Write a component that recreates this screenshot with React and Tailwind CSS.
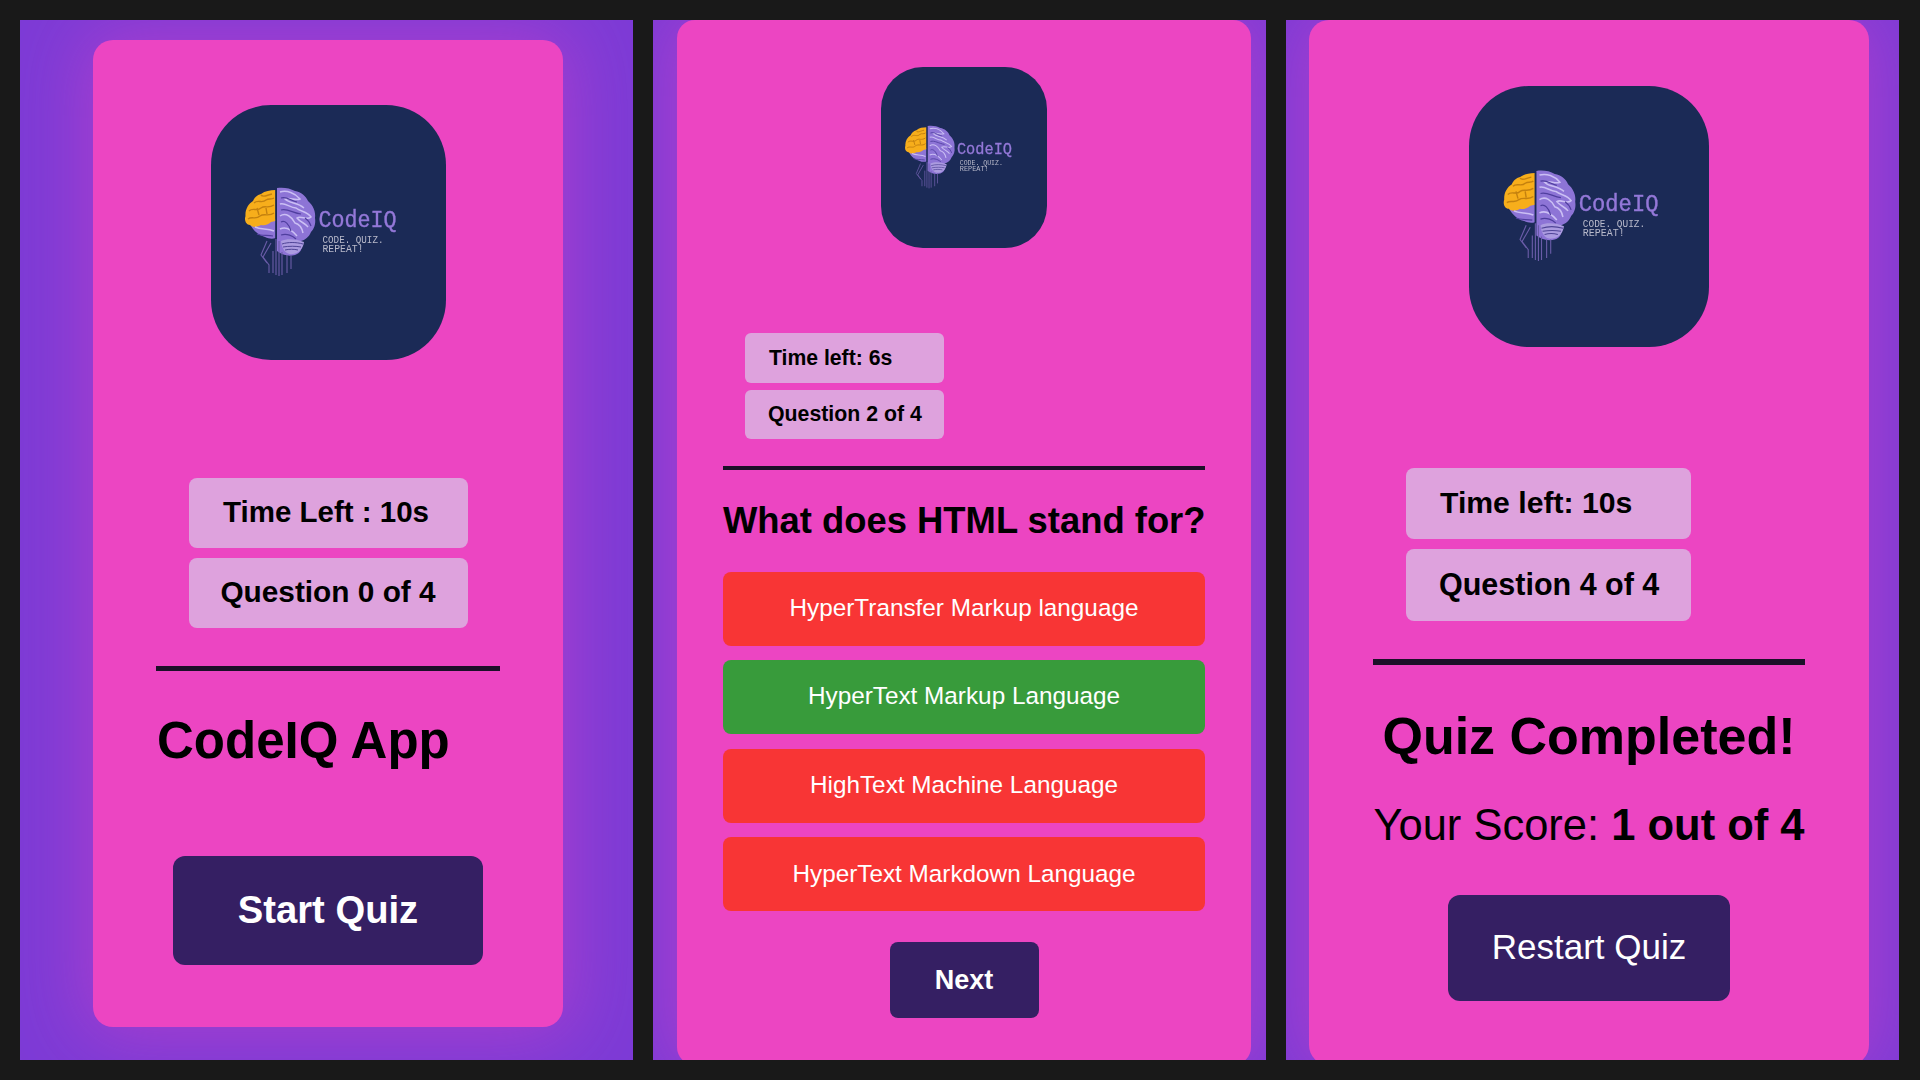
import React from "react";

// brain + wordmark, same drawing scaled for all three screens
const Logo = ({ className }) => (
  <div className={`flex-none overflow-hidden bg-[#1b2a56] ${className}`}>
    <svg viewBox="0 0 235 255" preserveAspectRatio="none" className="block h-full w-full blur-[0.5px]">
      {/* purple lobes */}
      <path d="M38 117C41 124 46 130 54 132C58 134 62 134 64.5 133L64.5 114L44 114Z" fill="#8d74d6" />
      <path d="M66 83C72 82 79 83 84 86C90 87 95 91 97 96C102 100 105 107 104 113C105 119 103 124 100 127C98 132 94 135 90 136C92 143 90 148 84 150C76 152 70 149 66 146Z" fill="#8d74d6" />
      {/* orange lobe */}
      <path d="M64.5 85C59 85 54 86 50 89C46 90 43 93 42 96C37 99 34 105 34.5 111C33 115 35 120 39 120C42 123 47 122 50 120C54 121 58 119 60 117L64.5 116Z" fill="#f7ae1b" />
      <g fill="none" stroke="#c4810f" strokeWidth="1.4">
        <path d="M43 98C47 94 51 99 55 95C58 93 60 95 63 93" />
        <path d="M38 106C42 102 46 107 50 103C54 100 57 104 63 100" />
        <path d="M37 114C41 111 45 115 49 111C53 108 58 112 63 108" />
        <path d="M50 90C52 93 56 90 61 89M46 103L48 110M55 103L56 109" />
      </g>
      <g fill="none" stroke="#cbbff4" strokeWidth="1.5">
        <path d="M69 87C76 85 84 88 89 94C84 96 79 92 74 94C79 99 86 97 93 103" />
        <path d="M69 99C74 97 79 103 85 103C90 107 96 106 100 112C96 116 90 110 86 113C89 117 94 118 97 122" />
        <path d="M69 111C75 107 81 112 84 118C88 119 91 123 92 128" />
        <path d="M44 122C50 125 56 123 63 126M69 124C75 121 81 125 86 131" />
      </g>
      <g fill="none" stroke="#4f3e9e" strokeWidth="1.2">
        <path d="M70 93C76 91 80 96 86 97M70 105C76 103 82 108 90 109M70 117C74 115 78 119 80 126" />
        <path d="M46 129C50 131 56 130 62 131M70 130C76 128 82 131 85 134M94 113C97 115 99 118 100 121" />
      </g>
      {/* cerebellum */}
      <path d="M70 136C76 133 86 134 93 137C92 144 88 148 82 149C76 150 71 146 70 136Z" fill="#ab9be0" />
      <g fill="none" stroke="#4f4496" strokeWidth="1">
        <path d="M71 139C77 137 85 137 92 139M72 142C78 141 85 141 90 142M74 145C78 144 83 144 87 145" />
      </g>
      <path d="M65 84L65 134" stroke="#1b2a56" strokeWidth="1.4" />
      {/* circuit stem */}
      <g fill="none" stroke="#6a5ca8" strokeWidth="1.1">
        <path d="M65 134L65 170M68 136L68 171M71 147L71 170M76 150L76 168M80 150L80 164" />
        <path d="M60 138L52 152L58 160L58 168M56 136L50 150L56 158M62 146L62 168" />
      </g>
      <text x="107.5" y="122" textLength="78" lengthAdjust="spacingAndGlyphs" fontFamily="'Liberation Mono', monospace" fontSize="24" stroke="#9478d8" strokeWidth="0.4" fill="#9478d8">CodeIQ</text>
      <text x="111.5" y="137.5" textLength="61" lengthAdjust="spacingAndGlyphs" fontFamily="'Liberation Mono', monospace" fontSize="10" fill="#b9bacb">CODE. QUIZ.</text>
      <text x="111.5" y="147" textLength="41" lengthAdjust="spacingAndGlyphs" fontFamily="'Liberation Mono', monospace" fontSize="10" fill="#b9bacb">REPEAT!</text>
    </svg>
  </div>
);

const Panel = ({ children }) => (
  <div className="h-[1040px] overflow-hidden bg-[#7d3bd6]">{children}</div>
);

const options = [
  { text: "HyperTransfer Markup language", color: "bg-[#f83535]" },
  { text: "HyperText Markup Language", color: "bg-[#389b3b]" },
  { text: "HighText Machine Language", color: "bg-[#f83535]" },
  { text: "HyperText Markdown Language", color: "bg-[#f83535]" },
];

const StartScreen = () => (
  <Panel>
    <div className="ml-[73px] mt-[20px] flex h-[987px] w-[470px] flex-col items-center rounded-[20px] bg-[#ec45c2] shadow-[0_0_70px_10px_rgba(240,70,195,0.36)]">
      <Logo className="mt-[65px] h-[255px] w-[235px] rounded-[60px]" />
      <div className="mt-[118px] flex h-[70px] w-[279px] items-center justify-center rounded-[8px] bg-[#dea2dd] pb-[1px] pr-[4px] text-[29.5px] font-bold text-black">Time Left : 10s</div>
      <div className="mt-[10px] flex h-[70px] w-[279px] items-center justify-center rounded-[8px] bg-[#dea2dd] pb-[1px] text-[29.8px] font-bold text-black">Question 0 of 4</div>
      <div className="mt-[38px] h-[5px] w-[344px] flex-none bg-[#1c1028]" />
      <h1 className="mt-[40px] w-[344px] pl-[1px] text-left text-[51px] font-bold leading-[60px] text-black">CodeIQ App</h1>
      <button className="mt-[85px] h-[109px] w-[310px] flex-none rounded-[12px] bg-[#351f63] pb-[2px] text-[38.2px] font-bold text-white">Start Quiz</button>
    </div>
  </Panel>
);

const QuestionScreen = () => (
  <Panel>
    <div className="ml-[24px] flex h-[1045px] w-[574px] flex-col items-center rounded-[18px] bg-[#ec45c2] shadow-[0_0_70px_10px_rgba(240,70,195,0.36)]">
      <Logo className="mt-[47px] h-[181px] w-[166px] rounded-[42px]" />
      <div className="ml-[68px] mt-[85px] flex w-[199px] flex-col gap-[7px] self-start">
        <div className="flex h-[50px] items-center rounded-[6px] bg-[#dea2dd] pb-[1px] pl-[24px] text-[21.2px] font-bold text-black">Time left: 6s</div>
        <div className="flex h-[49px] items-center rounded-[6px] bg-[#dea2dd] pl-[23px] text-[21.3px] font-bold text-black">Question 2 of 4</div>
      </div>
      <div className="mt-[27px] h-[4px] w-[482px] flex-none bg-[#1c1028]" />
      <h2 className="mt-[27.5px] w-[482px] whitespace-nowrap text-left text-[36.4px] font-bold leading-[45px] text-black">What does HTML stand for?</h2>
      <div className="mt-[29px] flex w-[482px] flex-col gap-[14.6px]">
        {options.map((o) => (
          <button key={o.text} className={`h-[74px] rounded-[8px] pb-[1px] text-[24.3px] text-white ${o.color}`}>{o.text}</button>
        ))}
      </div>
      <button className="mt-[30.5px] h-[76px] w-[149px] flex-none rounded-[8px] bg-[#351f63] text-[27px] font-bold text-white">Next</button>
    </div>
  </Panel>
);

const ResultScreen = () => (
  <Panel>
    <div className="ml-[23px] flex h-[1045px] w-[560px] flex-col items-center rounded-[20px] bg-[#ec45c2] shadow-[0_0_70px_10px_rgba(240,70,195,0.36)]">
      <Logo className="mt-[66px] h-[261px] w-[240px] rounded-[60px]" />
      <div className="ml-[97px] mt-[121px] flex w-[285px] flex-col gap-[10px] self-start">
        <div className="flex h-[71px] items-center rounded-[8px] bg-[#dea2dd] pb-[1px] pl-[34px] text-[30.2px] font-bold text-black">Time left: 10s</div>
        <div className="flex h-[72px] items-center rounded-[8px] bg-[#dea2dd] pl-[33px] text-[30.5px] font-bold text-black">Question 4 of 4</div>
      </div>
      <div className="mt-[38px] h-[5.5px] w-[432px] flex-none bg-[#1c1028]" />
      <h2 className="mt-[41px] whitespace-nowrap text-[52px] font-bold leading-[60px] text-black">Quiz Completed!</h2>
      <p className="mt-[33px] whitespace-nowrap text-[43.5px] leading-[52px] text-black">Your Score: <strong className="font-bold">1 out of 4</strong></p>
      <button className="mt-[44px] h-[106px] w-[282px] flex-none rounded-[12px] bg-[#351f63] text-[35px] text-white">Restart Quiz</button>
    </div>
  </Panel>
);

export default function App() {
  return (
    <div className="grid h-[1080px] grid-cols-[613px_613px_613px] gap-5 overflow-hidden bg-[#191919] p-5 font-['Liberation_Sans',Arial,sans-serif]">
      <StartScreen />
      <QuestionScreen />
      <ResultScreen />
    </div>
  );
}
